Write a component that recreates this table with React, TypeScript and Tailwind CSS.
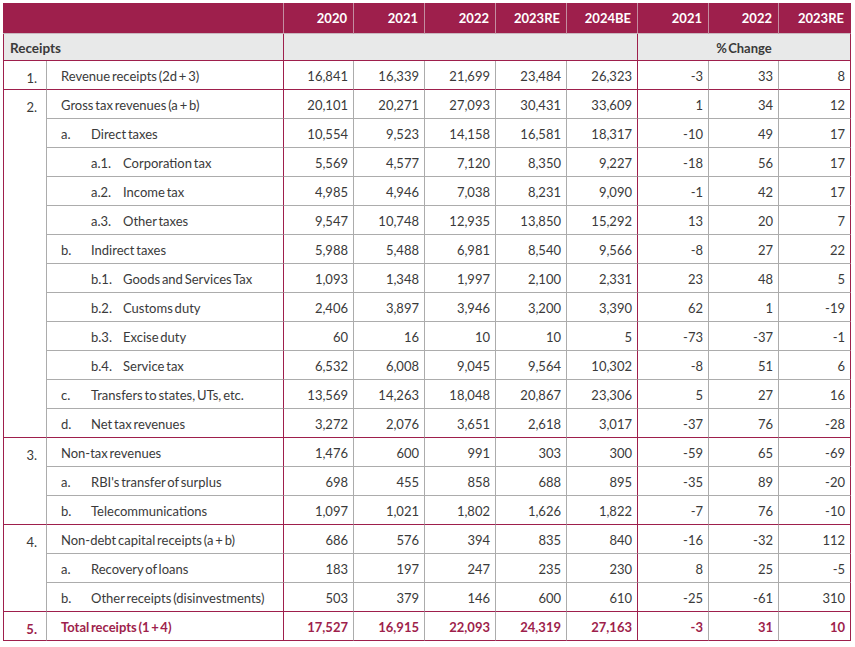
const CRIMSON = "border-[#9e1f4c]";

type Row = {
  num?: string;
  span?: number;
  prefix?: string;
  level: 0 | 1 | 2;
  label: string;
  vals: string[];
  end?: boolean;
  total?: boolean;
};

const rows: Row[] = [
  { num: "1.", span: 1, level: 0, label: "Revenue receipts (2d + 3)", vals: ["16,841", "16,339", "21,699", "23,484", "26,323", "-3", "33", "8"], end: true },
  { num: "2.", span: 12, level: 0, label: "Gross tax revenues (a + b)", vals: ["20,101", "20,271", "27,093", "30,431", "33,609", "1", "34", "12"] },
  { prefix: "a.", level: 1, label: "Direct taxes", vals: ["10,554", "9,523", "14,158", "16,581", "18,317", "-10", "49", "17"] },
  { prefix: "a.1.", level: 2, label: "Corporation tax", vals: ["5,569", "4,577", "7,120", "8,350", "9,227", "-18", "56", "17"] },
  { prefix: "a.2.", level: 2, label: "Income tax", vals: ["4,985", "4,946", "7,038", "8,231", "9,090", "-1", "42", "17"] },
  { prefix: "a.3.", level: 2, label: "Other taxes", vals: ["9,547", "10,748", "12,935", "13,850", "15,292", "13", "20", "7"] },
  { prefix: "b.", level: 1, label: "Indirect taxes", vals: ["5,988", "5,488", "6,981", "8,540", "9,566", "-8", "27", "22"] },
  { prefix: "b.1.", level: 2, label: "Goods and Services Tax", vals: ["1,093", "1,348", "1,997", "2,100", "2,331", "23", "48", "5"] },
  { prefix: "b.2.", level: 2, label: "Customs duty", vals: ["2,406", "3,897", "3,946", "3,200", "3,390", "62", "1", "-19"] },
  { prefix: "b.3.", level: 2, label: "Excise duty", vals: ["60", "16", "10", "10", "5", "-73", "-37", "-1"] },
  { prefix: "b.4.", level: 2, label: "Service tax", vals: ["6,532", "6,008", "9,045", "9,564", "10,302", "-8", "51", "6"] },
  { prefix: "c.", level: 1, label: "Transfers to states, UTs, etc.", vals: ["13,569", "14,263", "18,048", "20,867", "23,306", "5", "27", "16"] },
  { prefix: "d.", level: 1, label: "Net tax revenues", vals: ["3,272", "2,076", "3,651", "2,618", "3,017", "-37", "76", "-28"], end: true },
  { num: "3.", span: 3, level: 0, label: "Non-tax revenues", vals: ["1,476", "600", "991", "303", "300", "-59", "65", "-69"] },
  { prefix: "a.", level: 1, label: "RBI's transfer of surplus", vals: ["698", "455", "858", "688", "895", "-35", "89", "-20"] },
  { prefix: "b.", level: 1, label: "Telecommunications", vals: ["1,097", "1,021", "1,802", "1,626", "1,822", "-7", "76", "-10"], end: true },
  { num: "4.", span: 3, level: 0, label: "Non-debt capital receipts (a + b)", vals: ["686", "576", "394", "835", "840", "-16", "-32", "112"] },
  { prefix: "a.", level: 1, label: "Recovery of loans", vals: ["183", "197", "247", "235", "230", "8", "25", "-5"] },
  { prefix: "b.", level: 1, label: "Other receipts (disinvestments)", vals: ["503", "379", "146", "600", "610", "-25", "-61", "310"], end: true },
  { num: "5.", span: 1, level: 0, label: "Total receipts (1 + 4)", vals: ["17,527", "16,915", "22,093", "24,319", "27,163", "-3", "31", "10"], end: true, total: true },
];

const heads = ["2020", "2021", "2022", "2023RE", "2024BE", "2021", "2022", "2023RE"];

const rowSpans: Record<number, string> = {
  1: "row-span-1",
  3: "row-span-3",
  12: "row-span-12",
};

export default function App() {
  return (
    <div className="min-h-screen bg-white pt-[3px] pl-[3px] font-['Lato',sans-serif] text-[13px] text-[#3a3a3a]">
      <div className="grid w-[848px] grid-cols-[44px_237px_70px_71px_71px_71px_71px_71px_70px_72px]">
        {/* header */}
        <div className="col-span-2 h-[31px] border-b border-r border-b-[#c9b9c0] border-r-[#c48da1] bg-[#9e1f4c]" />
        {heads.map((h, i) => (
          <div
            key={i}
            className={`flex h-[31px] items-center justify-end border-b border-b-[#c9b9c0] bg-[#9e1f4c] pr-[6px] pt-[1px] font-bold text-white ${
              i === heads.length - 1 ? "border-r border-r-[#9e1f4c]" : "border-r border-r-[#c48da1]"
            }`}
          >
            {h}
          </div>
        ))}

        {/* receipts band */}
        <div className={`col-span-2 flex h-[27px] items-center border-b border-l border-r ${CRIMSON} bg-[#e8e9e9] pl-[6px] pt-[3px] text-[13.5px] font-bold`}>
          Receipts
        </div>
        <div className={`col-span-5 h-[27px] border-b border-r ${CRIMSON} bg-[#e8e9e9]`} />
        <div className={`col-span-3 flex h-[27px] items-center justify-center border-b border-r ${CRIMSON} bg-[#e8e9e9] pt-[3px] font-bold [word-spacing:-2px]`}>
          % Change
        </div>

        {rows.map((r, ri) => {
          const bottom = r.end ? CRIMSON : "border-b-[#acacac]";
          const color = r.total ? "font-bold text-[#9e1f4c]" : "";
          return [
            r.num ? (
              <div
                key={`n${ri}`}
                className={`${rowSpans[r.span ?? 1]} border-b border-l ${CRIMSON} border-r border-r-[#acacac] pr-[9px] pt-[8px] text-right ${color}`}
              >
                {r.num}
              </div>
            ) : null,
            <div
              key={`l${ri}`}
              className={`flex h-[29px] items-center border-b ${bottom} border-r ${CRIMSON} pl-[14px] pt-[3px] [word-spacing:-1.5px] ${color}`}
            >
              {r.level === 1 && <span className="w-[30px] shrink-0">{r.prefix}</span>}
              {r.level === 2 && (
                <>
                  <span className="w-[30px] shrink-0" />
                  <span className="w-[32px] shrink-0">{r.prefix}</span>
                </>
              )}
              <span className="whitespace-nowrap">{r.label}</span>
            </div>,
            ...r.vals.map((v, vi) => (
              <div
                key={`v${ri}-${vi}`}
                className={`flex h-[29px] items-center justify-end border-b ${bottom} border-r ${
                  vi === 4 || vi === 7 ? CRIMSON : "border-r-[#acacac]"
                } pr-[5px] pt-[3px] ${color}`}
              >
                {v}
              </div>
            )),
          ];
        })}
      </div>
    </div>
  );
}
